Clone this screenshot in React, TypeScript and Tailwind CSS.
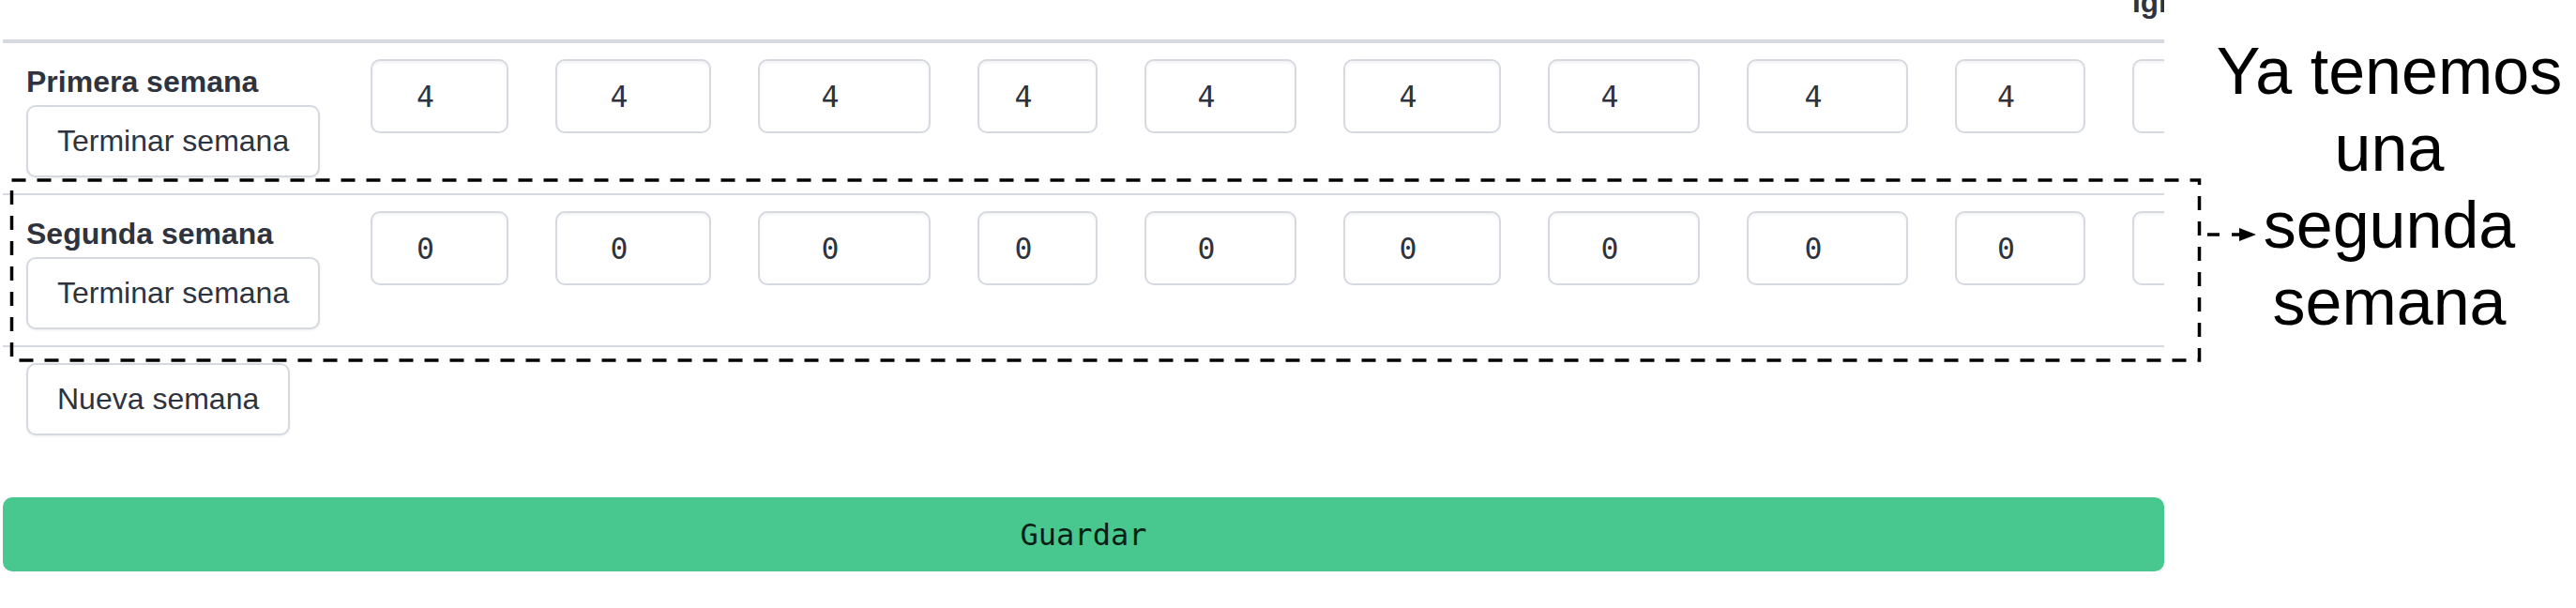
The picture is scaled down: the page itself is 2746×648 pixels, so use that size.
import React from 'react';

const columns = [
  { name: 'Lectura', width: 147 },
  { name: 'Escritura', width: 166 },
  { name: 'Matemáticas', width: 184 },
  { name: 'Arte', width: 128 },
  { name: 'Historia', width: 162 },
  { name: 'Ciencias', width: 168 },
  { name: 'Música', width: 162 },
  { name: 'Geografía', width: 172 },
  { name: 'Deporte', width: 139 },
  { name: 'Iglesia', width: 150 },
];

const weeks = [
  { label: 'Primera semana', value: '4' },
  { label: 'Segunda semana', value: '0' },
];

const sans = "font-['Liberation_Sans',Arial,sans-serif]";
const mono = "font-['DejaVu_Sans_Mono','Liberation_Mono',monospace]";

function WeekButton({ children }: { children: React.ReactNode }) {
  return (
    <button className="h-[77px] px-[31px] bg-white border-2 border-[#d6d9e0] rounded-[10px] shadow-[0_1px_3px_rgba(0,0,0,0.08)] text-[32px] leading-[49px] text-[#2e333d] whitespace-nowrap self-start">
      {children}
    </button>
  );
}

export default function App() {
  return (
    <div className={`relative w-[2746px] h-[648px] overflow-hidden bg-white text-[#2e333d] ${sans}`}>
      <div className="flex items-start">
        <div className="ml-[3px] w-[2304px] flex flex-col">
          <div className="-mt-[88.5px] overflow-hidden">
            <div className="w-max">
              {/* cabecera: solo asoma el final de la última columna */}
              <div className="flex items-end h-[134.5px] border-b-4 border-[#d6d9e0]">
                <div className="px-[25px] w-[367px]" />
                {columns.map((c, i) => (
                  <div key={c.name} className="px-[25px] pb-[15.5px]">
                    <div
                      className="text-[31.5px] leading-[49px] font-bold whitespace-nowrap overflow-hidden"
                      style={{ width: c.width }}
                    >
                      {i === columns.length - 1 ? c.name : null}
                    </div>
                  </div>
                ))}
              </div>

              {weeks.map((w) => (
                <div key={w.label} className="flex items-start border-b-2 border-[#d6d9e0]">
                  <div className="px-[25px] py-[17px] w-[367px] flex flex-col">
                    <span className="text-[32px] leading-[49px] font-bold whitespace-nowrap">{w.label}</span>
                    <WeekButton>Terminar semana</WeekButton>
                  </div>
                  {columns.map((c) => (
                    <div key={c.name} className="px-[25px] py-[17px]">
                      <input
                        readOnly
                        value={w.value}
                        className={`h-[79px] pl-[21px] pr-[51px] text-center bg-white border-2 border-[#d6d9e0] rounded-[10px] shadow-[inset_0_2px_3px_rgba(10,10,10,0.05)] text-[31.5px] text-[#2e333d] outline-none ${mono}`}
                        style={{ width: c.width }}
                      />
                    </div>
                  ))}
                </div>
              ))}
            </div>
          </div>

          <div className="px-[25px] pt-[17px]">
            <WeekButton>Nueva semana</WeekButton>
          </div>

          <button
            className={`mt-[66px] h-[79px] w-full rounded-[10px] bg-[#48c78e] text-[32px] text-[#0a1f14] ${mono}`}
          >
            Guardar
          </button>
        </div>

        <div className="ml-[45px] mt-[35px] w-[390px] text-center text-[70px] leading-[82px] text-black">
          Ya tenemos
          <br />
          una
          <br />
          segunda
          <br />
          semana
        </div>
      </div>

      <svg className="absolute inset-0 pointer-events-none" width="2746" height="648">
        <rect
          x="12.5"
          y="192"
          width="2332"
          height="192"
          fill="none"
          stroke="#000"
          strokeWidth="3.5"
          strokeDasharray="15 12"
        />
        <line x1="2353" y1="250" x2="2390" y2="250" stroke="#000" strokeWidth="3.5" strokeDasharray="13 13" />
        <polygon points="2387,243 2405,250 2387,257" fill="#000" />
      </svg>
    </div>
  );
}
